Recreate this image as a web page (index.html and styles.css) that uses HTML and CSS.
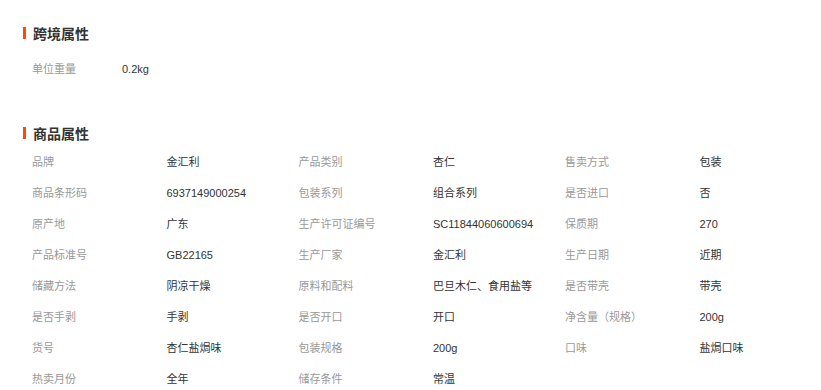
FILE: index.html
```html
<!DOCTYPE html>
<html lang="zh-CN">
<head>
<meta charset="utf-8">
<link rel="stylesheet" href="styles.css">
</head>
<body>
<div class="page">
  <section class="sec">
    <h3 class="title">跨境属性</h3>
    <div class="kv">
      <span class="lbl">单位重量</span><span class="val">0.2kg</span>
    </div>
  </section>
  <section class="sec sec2">
    <h3 class="title">商品属性</h3>
    <div class="grid">
      <span class="lbl">品牌</span><span class="val">金汇利</span>
      <span class="lbl">产品类别</span><span class="val">杏仁</span>
      <span class="lbl">售卖方式</span><span class="val">包装</span>

      <span class="lbl">商品条形码</span><span class="val">6937149000254</span>
      <span class="lbl">包装系列</span><span class="val">组合系列</span>
      <span class="lbl">是否进口</span><span class="val">否</span>

      <span class="lbl">原产地</span><span class="val">广东</span>
      <span class="lbl">生产许可证编号</span><span class="val">SC11844060600694</span>
      <span class="lbl">保质期</span><span class="val">270</span>

      <span class="lbl">产品标准号</span><span class="val">GB22165</span>
      <span class="lbl">生产厂家</span><span class="val">金汇利</span>
      <span class="lbl">生产日期</span><span class="val">近期</span>

      <span class="lbl">储藏方法</span><span class="val">阴凉干燥</span>
      <span class="lbl">原料和配料</span><span class="val">巴旦木仁、食用盐等</span>
      <span class="lbl">是否带壳</span><span class="val">带壳</span>

      <span class="lbl">是否手剥</span><span class="val">手剥</span>
      <span class="lbl">是否开口</span><span class="val">开口</span>
      <span class="lbl">净含量（规格）</span><span class="val">200g</span>

      <span class="lbl">货号</span><span class="val">杏仁盐焗味</span>
      <span class="lbl">包装规格</span><span class="val">200g</span>
      <span class="lbl">口味</span><span class="val">盐焗口味</span>

      <span class="lbl">热卖月份</span><span class="val">全年</span>
      <span class="lbl">储存条件</span><span class="val">常温</span>
    </div>
  </section>
</div>
</body>
</html>
```

FILE: styles.css
```css
html, body {
  margin: 0;
  padding: 0;
  background: #fff;
}
body {
  font-family: "Liberation Sans", "Noto Sans CJK SC", sans-serif;
  font-size: 11px;
  color: #333;
}
.page {
  padding: 27px 0 0 23px;
}
.title {
  margin: 0;
  height: 12px;
  line-height: 12px;
  border-left: 3px solid #ff4a00;
  padding-left: 7px;
  font-size: 14px;
  font-weight: bold;
  color: #333;
  font-family: "Noto Sans CJK SC", sans-serif;
}
.kv {
  margin-top: 15px;
  padding-left: 9px;
  display: grid;
  grid-template-columns: 90px auto;
  height: 31px;
  line-height: 31px;
}
.sec2 {
  margin-top: 42px;
}
.grid {
  margin-top: 8px;
  padding-left: 9px;
  display: grid;
  grid-template-columns: repeat(3, 134.5px 132px);
  grid-auto-rows: 31px;
  line-height: 31px;
}
.lbl {
  color: #999;
  white-space: nowrap;
}
.val {
  color: #333;
  white-space: nowrap;
}
```
